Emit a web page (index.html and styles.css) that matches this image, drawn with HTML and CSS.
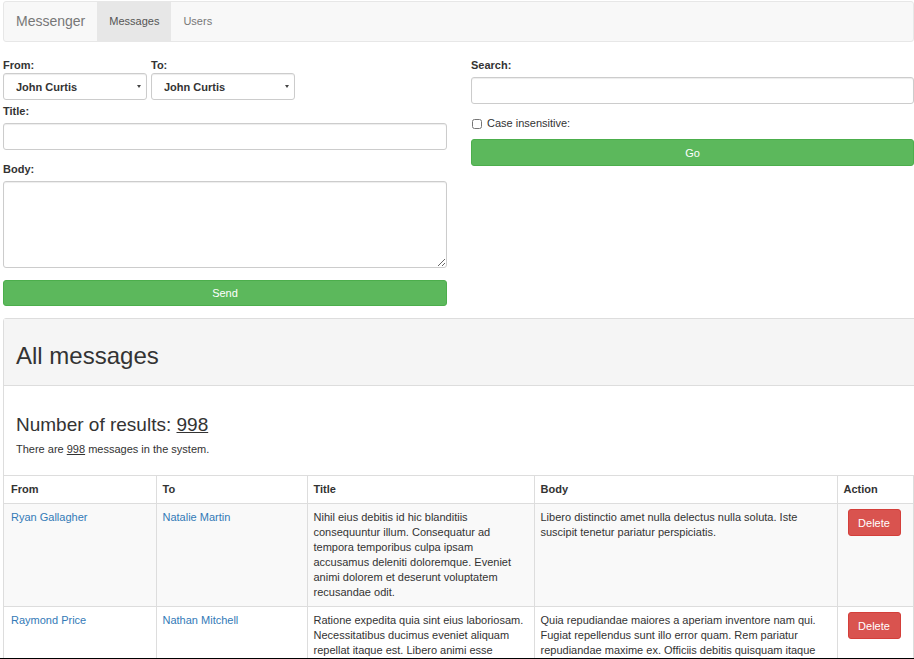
FILE: index.html
```html
<!DOCTYPE html>
<html lang="en">
<head>
<meta charset="utf-8">
<title>Messenger</title>
<link rel="stylesheet" href="styles.css">
</head>
<body>
<nav class="navbar">
  <span class="brand">Messenger</span>
  <a class="nav-link active" href="#">Messages</a>
  <a class="nav-link" href="#">Users</a>
</nav>

<div class="forms">
  <div class="col-left">
    <div class="inline-groups">
      <div class="group">
        <label class="lbl lbl-tight">From:</label>
        <div class="select-wrap"><select class="select"><option>John Curtis</option></select></div>
      </div>
      <div class="group">
        <label class="lbl lbl-tight">To:</label>
        <div class="select-wrap"><select class="select"><option>John Curtis</option></select></div>
      </div>
    </div>
    <label class="lbl lbl-title">Title:</label>
    <input class="input" type="text">
    <label class="lbl lbl-body">Body:</label>
    <textarea class="textarea"></textarea>
    <button class="btn btn-success btn-send">Send</button>
  </div>
  <div class="col-right">
    <label class="lbl lbl-search">Search:</label>
    <input class="input" type="text">
    <div class="check-row">
      <input class="checkbox" type="checkbox" id="ci">
      <label class="check-label" for="ci">Case insensitive:</label>
    </div>
    <button class="btn btn-success btn-go">Go</button>
  </div>
</div>

<section class="panel">
  <div class="panel-heading"><h1 class="panel-title">All messages</h1></div>
  <div class="panel-body">
    <h3 class="results">Number of results: <u>998</u></h3>
    <p class="summary">There are <u>998</u> messages in the system.</p>
  </div>
  <table class="table">
    <colgroup>
      <col class="c-from"><col class="c-to"><col class="c-title"><col class="c-body"><col class="c-action">
    </colgroup>
    <thead>
      <tr><th>From</th><th>To</th><th>Title</th><th>Body</th><th>Action</th></tr>
    </thead>
    <tbody>
      <tr class="striped">
        <td><a href="#">Ryan Gallagher</a></td>
        <td><a href="#">Natalie Martin</a></td>
        <td>Nihil eius debitis id hic blanditiis consequuntur illum. Consequatur ad tempora temporibus culpa ipsam accusamus deleniti doloremque. Eveniet animi dolorem et deserunt voluptatem recusandae odit.</td>
        <td>Libero distinctio amet nulla delectus nulla soluta. Iste suscipit tenetur pariatur perspiciatis.</td>
        <td><button class="btn btn-danger">Delete</button></td>
      </tr>
      <tr>
        <td><a href="#">Raymond Price</a></td>
        <td><a href="#">Nathan Mitchell</a></td>
        <td>Ratione expedita quia sint eius laboriosam. Necessitatibus ducimus eveniet aliquam repellat itaque est. Libero animi esse exercitationem nihil dolores.</td>
        <td>Quia repudiandae maiores a aperiam inventore nam qui. Fugiat repellendus sunt illo error quam. Rem pariatur repudiandae maxime ex. Officiis debitis quisquam itaque amet.</td>
        <td><button class="btn btn-danger">Delete</button></td>
      </tr>
    </tbody>
  </table>
</section>
<div class="bottom-edge"></div>
</body>
</html>
```

FILE: styles.css
```css
html, body {
  overflow: hidden;
}
body {
  margin: 0;
  padding: 1px 0 0 3px;
  font-family: "Liberation Sans", Arial, sans-serif;
  font-size: 11px;
  line-height: 15px;
  color: #333;
  background: #fff;
}

/* navbar */
.navbar {
  box-sizing: border-box;
  width: 911px;
  height: 41px;
  display: flex;
  align-items: stretch;
  background: #f8f8f8;
  border: 1px solid #e7e7e7;
  border-radius: 3px;
}
.brand {
  display: flex;
  align-items: center;
  padding: 0 12px;
  font-size: 14px;
  color: #777;
}
.nav-link {
  display: flex;
  align-items: center;
  padding: 0 12px;
  color: #777;
  text-decoration: none;
}
.nav-link.active {
  background: #e7e7e7;
  color: #555;
}

/* forms */
.forms {
  display: grid;
  grid-template-columns: 444px 443px;
  column-gap: 24px;
  margin-top: 16px;
  align-items: start;
}
.col-left, .col-right {
  display: flex;
  flex-direction: column;
}
.inline-groups {
  display: flex;
  gap: 4px;
}
.group {
  width: 144px;
  display: flex;
  flex-direction: column;
}
.lbl {
  display: block;
  font-weight: bold;
  line-height: 15px;
}
.lbl-tight { margin-bottom: 0; }
.lbl-title { margin: 4px 0 4px; }
.lbl-body { margin: 12px 0 4px; }
.lbl-search { margin-bottom: 4px; }

.select-wrap {
  position: relative;
}
.select-wrap::after {
  content: "";
  position: absolute;
  right: 6px;
  top: 12px;
  border-left: 2px solid transparent;
  border-right: 2px solid transparent;
  border-top: 3px solid #444;
}
.select {
  -webkit-appearance: none;
  appearance: none;
  box-sizing: border-box;
  width: 144px;
  height: 27px;
  padding: 0 12px;
  font: bold 11px "Liberation Sans", Arial, sans-serif;
  color: #333;
  background: #fff;
  border: 1px solid #ccc;
  border-radius: 3px;
  box-shadow: inset 0 1px 1px rgba(0,0,0,.075);
  margin: 0;
}
.input, .textarea {
  box-sizing: border-box;
  width: 100%;
  height: 27px;
  margin: 0;
  padding: 4px 9px;
  font: 11px "Liberation Sans", Arial, sans-serif;
  color: #555;
  background: #fff;
  border: 1px solid #ccc;
  border-radius: 3px;
  box-shadow: inset 0 1px 1px rgba(0,0,0,.075);
}
.textarea {
  height: 87px;
  display: block;
}
.check-row {
  display: flex;
  align-items: center;
  gap: 5px;
  margin-top: 12px;
  height: 15px;
}
.checkbox {
  width: 10px;
  height: 10px;
  margin: 0 0 0 1px;
}
.check-label {
  font-weight: normal;
}

.btn {
  box-sizing: border-box;
  height: 27px;
  font: 11px "Liberation Sans", Arial, sans-serif;
  color: #fff;
  border-radius: 3px;
  border: 1px solid transparent;
  cursor: pointer;
  padding: 0 11px;
}
.btn-success {
  width: 100%;
  background: #5cb85c;
  border-color: #4cae4c;
}
.btn-send { margin-top: 12px; height: 26px; }
.btn-go { margin-top: 8px; }
.btn-danger {
  background: #d9534f;
  border-color: #d43f3a;
  width: 53px;
  margin: -1px 0 0 4px;
  padding: 0;
  display: block;
}

/* panel */
.panel {
  box-sizing: border-box;
  width: 930px;
  margin-top: 12px;
  border: 1px solid #ddd;
  border-radius: 3px;
  background: #fff;
}
.panel-heading {
  padding: 24px 12px 16px;
  background: #f5f5f5;
  border-bottom: 1px solid #ddd;
}
.panel-title {
  margin: 0;
  font-size: 24px;
  line-height: 26px;
  font-weight: normal;
  color: #333;
}
.panel-body {
  padding: 28px 12px 18px;
}
.results {
  margin: 0;
  font-size: 19px;
  line-height: 21px;
  font-weight: normal;
}
.summary {
  margin: 7px 0 0;
}

.table {
  table-layout: fixed;
  width: 909px;
  border-collapse: collapse;
  border-spacing: 0;
}
.c-from { width: 152px; }
.c-to { width: 151px; }
.c-title { width: 227px; }
.c-body { width: 303px; }
.c-action { width: 76px; }
.table th, .table td {
  border: 1px solid #ddd;
  padding: 6px;
  text-align: left;
  vertical-align: top;
  line-height: 15px;
}
.table th:first-child, .table td:first-child {
  border-left: 0;
  padding-left: 7px;
}
.table th {
  font-weight: bold;
}
.table tr.striped td {
  background: #f9f9f9;
}
.table a {
  color: #337ab7;
  text-decoration: none;
}

.bottom-edge {
  position: fixed;
  left: 0;
  right: 0;
  bottom: 0;
  height: 1px;
  background: #000;
}
```
